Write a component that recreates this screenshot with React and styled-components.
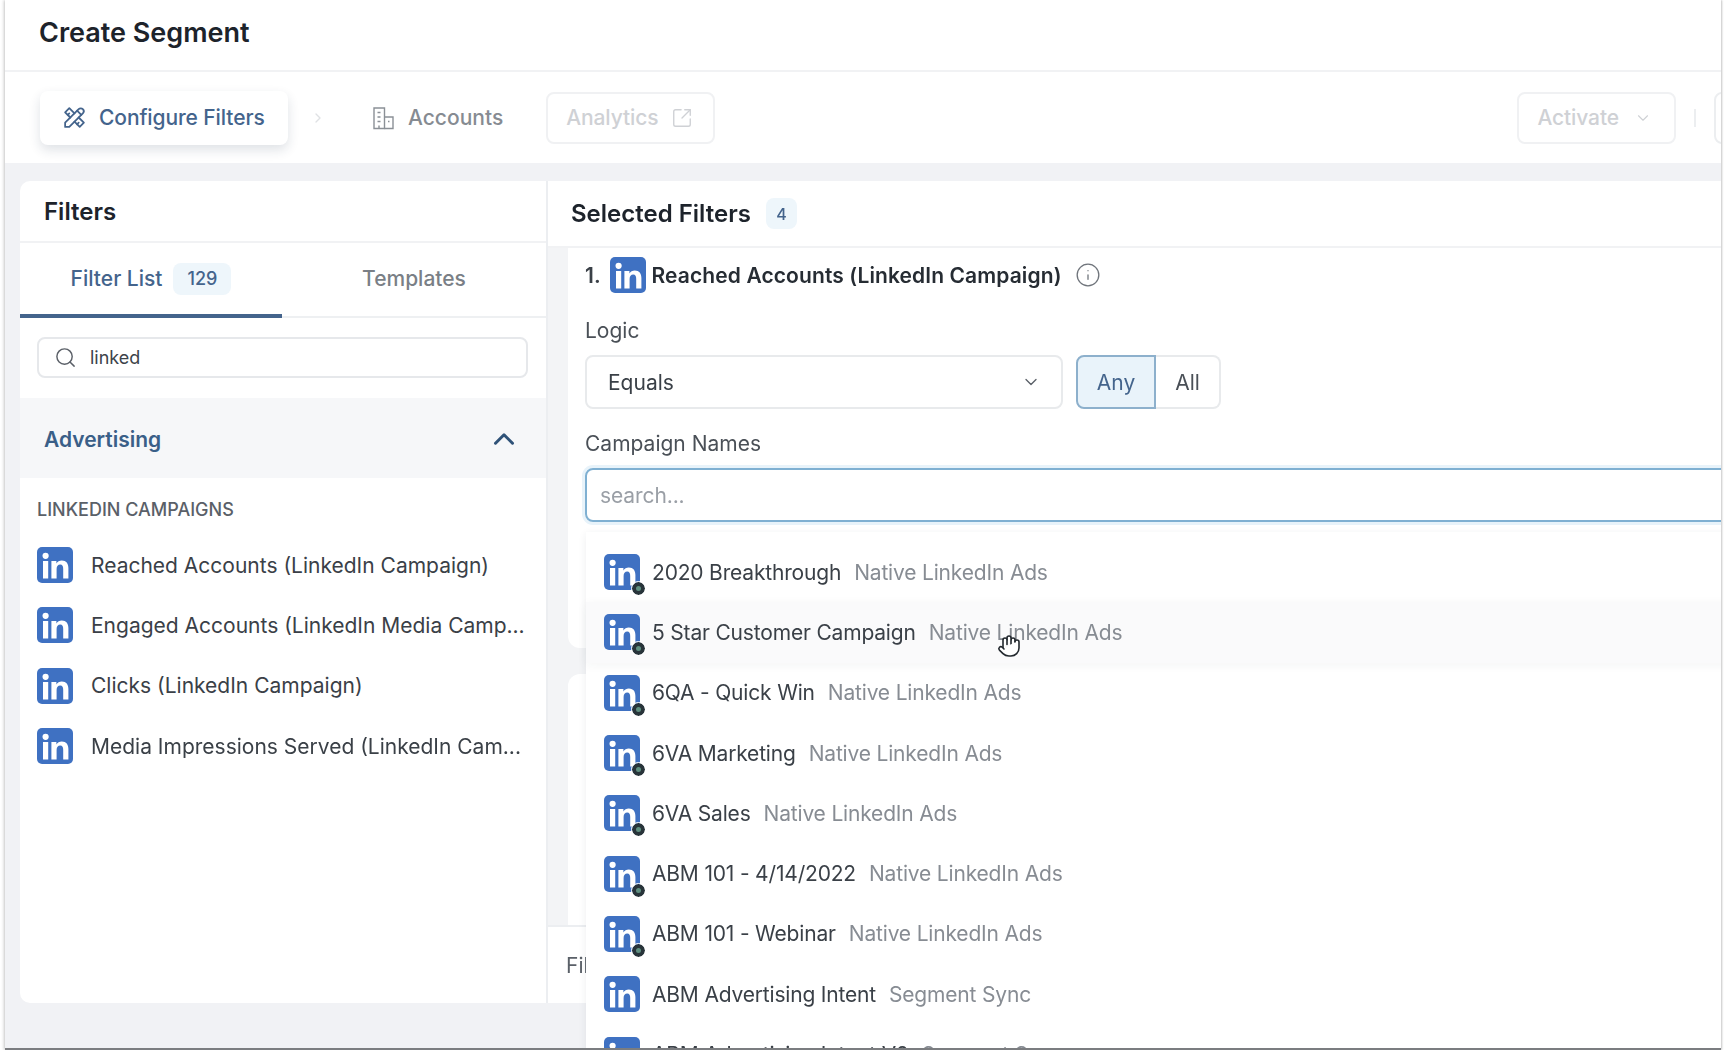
import React from "react";
import styled, { createGlobalStyle } from "styled-components";
import { ChevronDown, ChevronRight, ChevronUp, Hand, Info, Search, SquareArrowOutUpRight } from "lucide-react";
import { TbTools } from "react-icons/tb";

const GlobalStyle = createGlobalStyle`
  html, body {
    margin: 0;
    width: 1724px;
    height: 1050px;
    overflow: hidden;
    background: #fff;
  }
  * { box-sizing: border-box; }
`;

const filterItems = [
  "Reached Accounts (LinkedIn Campaign)",
  "Engaged Accounts (LinkedIn Media Camp...",
  "Clicks (LinkedIn Campaign)",
  "Media Impressions Served (LinkedIn Cam...",
];

const campaigns = [
  { name: "2020 Breakthrough", source: "Native LinkedIn Ads", dot: true },
  { name: "5 Star Customer Campaign", source: "Native LinkedIn Ads", dot: true, hover: true },
  { name: "6QA - Quick Win", source: "Native LinkedIn Ads", dot: true },
  { name: "6VA Marketing", source: "Native LinkedIn Ads", dot: true },
  { name: "6VA Sales", source: "Native LinkedIn Ads", dot: true },
  { name: "ABM 101 - 4/14/2022", source: "Native LinkedIn Ads", dot: true },
  { name: "ABM 101 - Webinar", source: "Native LinkedIn Ads", dot: true },
  { name: "ABM Advertising Intent", source: "Segment Sync" },
  { name: "ABM Advertising Intent V2", source: "Segment Sync" },
];

function LinkedInLogo({ size = 36 }) {
  return (
    <svg width={size} height={size} viewBox="0 0 36 36">
      <rect width="36" height="36" rx="5" fill="#3f71c2" />
      <circle cx="8.6" cy="8.8" r="3.1" fill="#fff" />
      <rect x="6" y="14" width="5.2" height="17.5" fill="#fff" />
      <path
        d="M14.4 14h5v2.6c1-1.9 3-3.1 5.4-3.1 4.5 0 6.6 3 6.6 7.6v10.4h-5.2v-9.6c0-2.5-.8-4.3-3-4.3s-3.6 1.8-3.6 4.3v9.6h-5.2z"
        fill="#fff"
      />
    </svg>
  );
}

function AccountsIcon() {
  return (
    <svg width="23" height="24" viewBox="0 0 23 24" fill="none" stroke="#8b9096" strokeWidth="1.4">
      <path d="M2 22.5V2h10.5v20.5z" />
      <path d="M12.5 11H21v11.5h-8.5" />
      <path d="M5.5 6.5h3M5.5 11h3M5.5 15.5h3M16 15.5h1.5M7 22.5v-3" />
    </svg>
  );
}

function App() {
  return (
    <Shell>
      <GlobalStyle />
      <TitleBar>Create Segment</TitleBar>
      <Toolbar>
        <ActiveStep>
          <TbTools size={25} strokeWidth={1.7} />
          Configure Filters
        </ActiveStep>
        <StepArrow>
          <ChevronRight size={16} />
        </StepArrow>
        <Step>
          <AccountsIcon />
          Accounts
        </Step>
        <AnalyticsButton>
          Analytics
          <SquareArrowOutUpRight size={22} strokeWidth={1.5} />
        </AnalyticsButton>
        <ToolbarRight>
          <ActivateButton>
            Activate
            <ChevronDown size={18} strokeWidth={1.5} />
          </ActivateButton>
          <Separator />
          <CutButton />
        </ToolbarRight>
      </Toolbar>

      <Body>
        <FiltersPanel>
          <PanelTitle>Filters</PanelTitle>
          <Tabs>
            <Tab $active>
              Filter List
              <CountBadge>129</CountBadge>
            </Tab>
            <Tab>Templates</Tab>
          </Tabs>
          <SearchRow>
            <SearchBox>
              <Search size={23} strokeWidth={1.5} color="#5b6068" />
              linked
            </SearchBox>
          </SearchRow>
          <SectionHead>
            Advertising
            <ChevronUp size={34} strokeWidth={2.1} color="#2f5278" />
          </SectionHead>
          <GroupLabel>LINKEDIN CAMPAIGNS</GroupLabel>
          {filterItems.map((item) => (
            <FilterRow key={item}>
              <LinkedInLogo />
              {item}
            </FilterRow>
          ))}
        </FiltersPanel>

        <SelectedPanel>
          <SelectedHead>
            Selected Filters
            <SmallBadge>4</SmallBadge>
          </SelectedHead>
          <CardArea>
            <FilterCard>
              <CardTitle>
                <Order>1.</Order>
                <LinkedInLogo />
                <strong>Reached Accounts (LinkedIn Campaign)</strong>
                <Info size={26} strokeWidth={1.2} color="#6f747b" />
              </CardTitle>
              <FieldLabel $top={25}>Logic</FieldLabel>
              <LogicRow>
                <SelectBox>
                  Equals
                  <ChevronDown size={20} strokeWidth={1.6} color="#5b6068" />
                </SelectBox>
                <Toggle>
                  <ToggleOption $on>Any</ToggleOption>
                  <ToggleOption>All</ToggleOption>
                </Toggle>
              </LogicRow>
              <FieldLabel $top={22}>Campaign Names</FieldLabel>
              <SearchWrap>
                <CampaignSearch>search...</CampaignSearch>
                <Dropdown>
                  {campaigns.map((c) => (
                    <CampaignRow key={c.name} $hover={c.hover}>
                      <LogoWrap>
                        <LinkedInLogo />
                        {c.dot && <StatusDot />}
                      </LogoWrap>
                      <span>{c.name}</span>
                      <Source>{c.source}</Source>
                      {c.hover && (
                        <Cursor>
                          <Hand size={24} strokeWidth={1.6} color="#22282e" fill="#fff" />
                        </Cursor>
                      )}
                    </CampaignRow>
                  ))}
                </Dropdown>
              </SearchWrap>
            </FilterCard>
            <SecondCard />
          </CardArea>
          <Footer>Filters</Footer>
        </SelectedPanel>
      </Body>
    </Shell>
  );
}

const Shell = styled.div`
  position: relative;
  width: 1716px;
  height: 1050px;
  margin: 0 3px 0 5px;
  display: flex;
  flex-direction: column;
  overflow: hidden;
  background: #f1f2f5;
  font-family: Inter, "Liberation Sans", sans-serif;
  color: #2c3239;
  border-bottom: 2px solid #7b7d80;
  box-shadow: -1px 0 3px rgba(0, 0, 0, 0.22), 1px 0 2px rgba(0, 0, 0, 0.2);
  filter: blur(0.5px);
`;

const TitleBar = styled.div`
  height: 72px;
  flex: none;
  padding: 0 0 5px 34px;
  display: flex;
  align-items: center;
  background: #fff;
  border-bottom: 2px solid #f1f2f4;
  font-size: 27px;
  font-weight: 600;
  color: #1d232b;
`;

const Toolbar = styled.div`
  height: 91px;
  flex: none;
  padding: 0 0 0 35px;
  display: flex;
  align-items: center;
  background: #fff;
`;

const ActiveStep = styled.div`
  width: 248px;
  height: 54px;
  padding-left: 22px;
  display: flex;
  align-items: center;
  gap: 12px;
  border-radius: 8px;
  background: #fff;
  box-shadow: 0 5px 12px rgba(30, 50, 80, 0.14);
  font-size: 21px;
  font-weight: 500;
  letter-spacing: -0.1px;
  color: #44648c;
`;

const StepArrow = styled.div`
  width: 60px;
  display: flex;
  justify-content: center;
  color: #dfe1e4;
`;

const Step = styled.div`
  display: flex;
  align-items: center;
  gap: 13px;
  margin-left: 24px;
  font-size: 21px;
  font-weight: 500;
  color: #868b92;
`;

const GhostButton = styled.div`
  height: 52px;
  display: flex;
  align-items: center;
  border: 2px solid #f0f1f3;
  border-radius: 8px;
  font-size: 21px;
  font-weight: 500;
  letter-spacing: -0.1px;
  color: #cfd1d5;
`;

const AnalyticsButton = styled(GhostButton)`
  margin-left: 43px;
  padding: 0 20px 0 18px;
  gap: 13px;
`;

const ActivateButton = styled(GhostButton)`
  padding: 0 22px 0 18px;
  gap: 15px;
`;

const ToolbarRight = styled.div`
  margin-left: auto;
  display: flex;
  align-items: center;
`;

const Separator = styled.div`
  width: 2px;
  height: 18px;
  margin: 0 18px 0 18px;
  background: #eceef0;
`;

const CutButton = styled.div`
  width: 30px;
  height: 52px;
  margin-right: -23px;
  border: 2px solid #eceef0;
  border-radius: 8px;
`;

const Body = styled.div`
  flex: 1;
  min-height: 0;
  margin-top: 18px;
  padding: 0 0 45px 15px;
  display: flex;
  overflow: hidden;
`;

const FiltersPanel = styled.div`
  width: 528px;
  flex: none;
  background: #fff;
  border-radius: 10px 0 0 10px;
  border-right: 2px solid #eceef1;
`;

const PanelTitle = styled.div`
  height: 62px;
  padding-left: 24px;
  display: flex;
  align-items: center;
  border-bottom: 2px solid #f1f2f4;
  font-size: 24px;
  font-weight: 600;
  color: #1d232b;
`;

const Tabs = styled.div`
  height: 75px;
  display: grid;
  grid-template-columns: 262px 1fr;
  border-bottom: 2px solid #eef0f2;
`;

const Tab = styled.div`
  display: flex;
  align-items: center;
  justify-content: center;
  gap: 11px;
  margin-bottom: -2px;
  font-size: 21px;
  font-weight: 500;
  color: ${(p) => (p.$active ? "#44648c" : "#7a7f86")};
  border-bottom: 4px solid ${(p) => (p.$active ? "#44648c" : "transparent")};
`;

const CountBadge = styled.span`
  padding: 5px 14px;
  border-radius: 8px;
  background: #eef6fb;
  font-size: 18px;
  line-height: 22px;
`;

const SearchRow = styled.div`
  height: 80px;
  padding: 19px 18px 0 17px;
`;

const SearchBox = styled.div`
  height: 41px;
  padding-left: 15px;
  display: flex;
  align-items: center;
  gap: 13px;
  border: 2px solid #e6e8eb;
  border-radius: 8px;
  font-size: 18px;
  color: #3d434a;
`;

const SectionHead = styled.div`
  height: 80px;
  padding: 2px 25px 0 24px;
  display: flex;
  align-items: center;
  justify-content: space-between;
  background: #f6f7f9;
  font-size: 21px;
  font-weight: 600;
  color: #3a5f88;
`;

const GroupLabel = styled.div`
  margin: 21px 0 14px 17px;
  font-size: 18px;
  line-height: 22px;
  font-weight: 500;
  color: #5a6068;
`;

const FilterRow = styled.div`
  height: 60.3px;
  padding-left: 17px;
  display: flex;
  align-items: center;
  gap: 18px;
  font-size: 21px;
  color: #3a4047;
  white-space: nowrap;
`;

const SelectedPanel = styled.div`
  flex: 1;
  min-width: 0;
  display: flex;
  flex-direction: column;
  background: #fff;
`;

const SelectedHead = styled.div`
  height: 67px;
  flex: none;
  padding-left: 23px;
  display: flex;
  align-items: center;
  gap: 15px;
  border-bottom: 2px solid #f1f2f4;
  font-size: 24px;
  font-weight: 600;
  color: #1d232b;
`;

const SmallBadge = styled.span`
  width: 31px;
  height: 31px;
  display: flex;
  align-items: center;
  justify-content: center;
  border-radius: 8px;
  background: #eef6fb;
  font-size: 16px;
  font-weight: 500;
  color: #44648c;
`;

const CardArea = styled.div`
  flex: 1;
  min-height: 0;
  padding-left: 20px;
  display: flex;
  flex-direction: column;
  gap: 26px;
  background: #f3f4f6;
`;

const FilterCard = styled.div`
  height: 400px;
  flex: none;
  padding: 9px 0 0 17px;
  background: #fff;
  border-radius: 0 0 0 12px;
`;

const SecondCard = styled.div`
  flex: 1;
  background: #fff;
  border-radius: 12px 0 0 0;
`;

const CardTitle = styled.div`
  display: flex;
  align-items: center;
  gap: 6px;
  font-size: 21px;
  font-weight: 600;
  color: #3a4047;

  strong {
    font-weight: 600;
    letter-spacing: 0.1px;
    color: #262c33;
    margin-right: 7px;
  }
`;

const Order = styled.span`
  margin-right: 3px;
`;

const FieldLabel = styled.div`
  margin-top: ${(p) => p.$top}px;
  margin-bottom: 11px;
  font-size: 21px;
  line-height: 26px;
  color: #4a5057;
`;

const LogicRow = styled.div`
  display: flex;
  gap: 13px;
`;

const SelectBox = styled.div`
  width: 478px;
  height: 54px;
  padding: 0 20px 0 21px;
  display: flex;
  align-items: center;
  justify-content: space-between;
  border: 2px solid #e8eaec;
  border-radius: 8px;
  font-size: 21px;
  color: #3a4047;
`;

const Toggle = styled.div`
  display: flex;
  height: 54px;
`;

const ToggleOption = styled.div`
  width: ${(p) => (p.$on ? 80 : 65)}px;
  display: flex;
  align-items: center;
  justify-content: center;
  font-size: 21px;
  color: ${(p) => (p.$on ? "#44648c" : "#4a5057")};
  background: ${(p) => (p.$on ? "#e9f3fa" : "#fff")};
  border: 2px solid ${(p) => (p.$on ? "#8db0cc" : "#e8eaec")};
  border-left-width: ${(p) => (p.$on ? 2 : 0)}px;
  border-radius: ${(p) => (p.$on ? "8px 0 0 8px" : "0 8px 8px 0")};
`;

const SearchWrap = styled.div`
  position: relative;
  margin-right: -12px;
`;

const CampaignSearch = styled.div`
  height: 54px;
  padding-left: 13px;
  display: flex;
  align-items: center;
  border: 2px solid #7fb0d2;
  border-radius: 8px;
  box-shadow: 0 0 0 3px #e8f3fa;
  font-size: 21px;
  letter-spacing: -0.1px;
  color: #9a9fa6;
`;

const Dropdown = styled.div`
  position: absolute;
  top: 64px;
  left: 1px;
  right: 0;
  height: 540px;
  padding-top: 10px;
  background: #fff;
  box-shadow: 0 2px 8px rgba(40, 50, 60, 0.08);
  z-index: 5;
`;

const CampaignRow = styled.div`
  position: relative;
  height: 60.3px;
  padding-left: 18px;
  display: flex;
  align-items: center;
  font-size: 21px;
  letter-spacing: -0.18px;
  color: #3a4047;
  white-space: nowrap;
  background: ${(p) => (p.$hover ? "#fafafb" : "transparent")};
  box-shadow: ${(p) => (p.$hover ? "0 2px 10px rgba(40, 50, 60, 0.05)" : "none")};
`;

const LogoWrap = styled.div`
  position: relative;
  width: 36px;
  height: 36px;
  margin-right: 12px;
`;

const StatusDot = styled.span`
  position: absolute;
  right: -5px;
  bottom: -5px;
  width: 13px;
  height: 13px;
  border-radius: 50%;
  background: #5f8f80;
  border: 4px solid #28343a;
  outline: 1px solid #fff;
`;

const Source = styled.span`
  margin-left: 13px;
  color: #878c93;
`;

const Cursor = styled.span`
  position: absolute;
  left: 411px;
  top: 32px;
`;

const Footer = styled.div`
  height: 78px;
  flex: none;
  padding-left: 18px;
  display: flex;
  align-items: center;
  border-top: 2px solid #eceef1;
  font-size: 21px;
  color: #5a6068;
`;

export default App;
